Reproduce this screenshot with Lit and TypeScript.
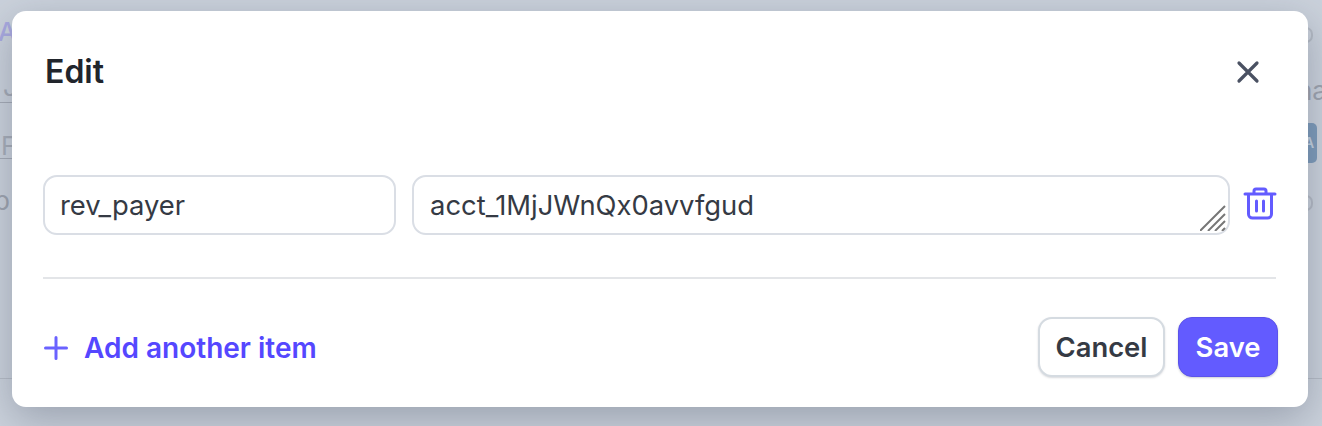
import { LitElement, html, css } from "lit";
import { customElement } from "lit/decorators.js";

@customElement("app-root")
export class AppRoot extends LitElement {
  static styles = css`
    :host { display: block; width: 1322px; height: 426px; overflow: hidden; font-family: Inter, "Liberation Sans", sans-serif; }
    .backdrop { position: relative; width: 1322px; height: 426px; background: #cbd2dc; overflow: hidden; padding: 11px 14px 19px 12px; box-sizing: border-box; }
    .bg { position: absolute; color: #9ea4af; font-size: 26px; line-height: 30px; }
    .a { left: -2px; top: 17px; color: #a9a9e0; font-weight: 500; }
    .j { left: 3px; top: 72px; color: #a5abb6; }
    .f { left: 1px; top: 131px; color: #a7adb8; }
    .b { left: -6px; top: 186px; }
    .na { left: 1297px; top: 76px; }
    .l { position: absolute; left: 0; width: 12px; height: 1px; background: #a5abb6; }
    .l1 { top: 102px; } .l2 { top: 158px; }
    .l3 { position: absolute; left: 0; right: 0; top: 378px; height: 1px; background: #b6bcc6; }
    .tag { position: absolute; left: 1296px; top: 123px; width: 21px; height: 40px; background: #7d9bba; border-radius: 5px; color: #c5d3e0; font-size: 14px; font-weight: 600; line-height: 40px; text-align: center; text-indent: 5px; }
    .ring { position: absolute; left: 1306px; width: 5px; height: 12px; border: 2px solid #b5bbc5; border-left: 0; border-radius: 0 8px 8px 0; }
    .r1 { top: 27px; } .r2 { top: 195px; }
    .modal { position: relative; box-sizing: border-box; width: 1296px; height: 396px; background: #fff; border-radius: 14px; box-shadow: 0 12px 40px rgba(60,66,87,.34); padding: 0 32px 30px 31px; display: flex; flex-direction: column; }
    .head { display: flex; align-items: center; justify-content: space-between; padding: 0 16px 0 2px; box-sizing: border-box; height: 122px; margin-bottom: 43px; }
    .title { font-size: 32px; font-weight: 600; color: #21252c; line-height: 36px; }
    .x { width: 24px; height: 24px; display: block; }
    .row { display: flex; align-items: flex-start; gap: 16px; padding-bottom: 42px; border-bottom: 2px solid #e3e5e8; }
    .field { box-sizing: border-box; height: 60px; border: 2px solid #dadee5; border-radius: 14px; display: flex; align-items: center; padding: 0 16px; font-size: 27.4px; color: #353a44; background: #fff; }
    .key { width: 353px; flex: none; padding-left: 15px; }
    .val { width: 818px; flex: none; position: relative; }
    .grip { position: absolute; right: 2px; bottom: 2px; width: 26px; height: 26px; }
    .trash { width: 34px; height: 34px; margin: 11px 0 0 -3px; flex: none; display: block; }
    .foot { display: flex; align-items: center; justify-content: space-between; margin-top: 38px; }
    .add { display: flex; align-items: center; gap: 16px; padding: 2px 0 0 1px; color: #5547ff; font-size: 28px; font-weight: 600; }
    .plus { width: 24px; height: 24px; display: block; }
    .btns { display: flex; gap: 13px; align-items: center; margin-right: -2px; }
    .btn { box-sizing: border-box; height: 60px; border-radius: 14px; font-size: 27.4px; font-weight: 600; display: flex; align-items: center; justify-content: center; font-family: inherit; }
    .cancel { width: 127px; background: #fff; color: #353a44; border: 2px solid #d5dbe1; box-shadow: 0 1px 2px rgba(60,66,87,.2); }
    .save { width: 100px; background: #635bff; color: #fff; border: 1px solid #5b53ea; box-shadow: 0 1px 2px rgba(60,66,87,.25); }
  `;
  render() {
    return html`<div class="backdrop">
      <div class="bg a">A</div><div class="bg j">J</div><div class="bg f">F</div><div class="bg b">b</div><div class="bg na">na</div>
      <div class="l l1"></div><div class="l l2"></div><div class="l3"></div>
      <div class="tag">A</div><div class="ring r1"></div><div class="ring r2"></div>
      <div class="modal">
        <div class="head"><div class="title">Edit</div>
          <svg class="x" viewBox="0 0 24 24" fill="none" stroke="#4a5162" stroke-width="3.2" stroke-linecap="round"><path d="M3 3l18 18M21 3L3 21"/></svg>
        </div>
        <div class="row">
          <div class="field key">rev_payer</div>
          <div class="field val">acct_1MjJWnQx0avvfgud
            <svg class="grip" viewBox="0 0 26 26" stroke="#777" stroke-width="2" fill="none"><path d="M0 26L25 1M8 26L25 9M15 26L25 16M22 26l3-3"/></svg>
          </div>
          <svg class="trash" viewBox="0 0 34 34" fill="none" stroke="#635bff" stroke-width="3" stroke-linecap="round" stroke-linejoin="round"><path d="M2 8h30M11 8V5a2 2 0 0 1 2-2h8a2 2 0 0 1 2 2v3M5.500 8v20a4 4 0 0 0 4 4h15a4 4 0 0 0 4-4V8M13.500 15v10M20.500 15v10"/></svg>
        </div>
        <div class="foot">
          <div class="add"><svg class="plus" viewBox="0 0 24 24" fill="none" stroke="#6a62ff" stroke-width="3" stroke-linecap="round"><path d="M12 1.500v21M1.500 12h21"/></svg>Add another item</div>
          <div class="btns"><button class="btn cancel">Cancel</button><button class="btn save">Save</button></div>
        </div>
      </div>
    </div>`;
  }
}
